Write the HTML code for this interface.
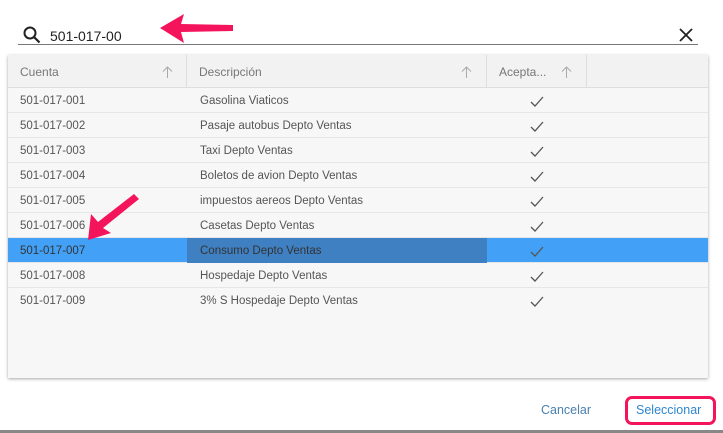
<!DOCTYPE html>
<html><head><style>
*{margin:0;padding:0;box-sizing:border-box}
body{width:723px;height:433px;background:#fff;font-family:"Liberation Sans",sans-serif;position:relative;overflow:hidden;color:#444}
.abs{position:absolute}
.grid{left:8px;top:55px;width:700px;height:323px;background:#f7f7f7;box-shadow:0 1px 3px rgba(0,0,0,.35)}
.hdr{position:absolute;left:0;top:0;width:700px;height:33px;background:#f2f2f2;border-bottom:1px solid #ddd}
.hc{position:absolute;top:0;height:33px;line-height:34px;font-size:12px;color:#777;border-right:1px solid #ddd;padding-left:12px}
.arr{position:absolute;top:11px}
.row{position:absolute;left:0;width:700px;height:25px;border-bottom:1px solid #e6e6e6;font-size:11.5px;line-height:26px;color:#555}
.row span{position:absolute}
.c1{left:12px}.c2{left:192px}
.chk{position:absolute;left:522px;top:8px}
.sel{background:#43a0f7;color:#333}
.sel .d{position:absolute;left:179px;top:0;width:300px;height:25px;background:#3f80c2}
</style></head><body>
<svg class="abs" style="left:22px;top:25px" width="20" height="20" viewBox="0 0 20 20"><circle cx="8" cy="8" r="5.5" fill="none" stroke="#222" stroke-width="2"/><line x1="12" y1="12" x2="17.5" y2="17.5" stroke="#222" stroke-width="2.2"/></svg>
<div class="abs" style="left:50px;top:28px;font-size:14px;color:#222">501-017-00</div>
<div class="abs" style="left:18px;top:44px;width:680px;height:1px;background:#777"></div>
<svg class="abs" style="left:678px;top:27px" width="16" height="16"><path d="M2 2L14 14M14 2L2 14" stroke="#222" stroke-width="1.8"/></svg>
<div class="abs grid">
<div class="hdr">
<div class="hc" style="left:0;width:179px">Cuenta<svg class="arr" style="left:154px" width="11" height="12"><path d="M5.5 1V12M1 5.5L5.5 1L10 5.5" fill="none" stroke="#aaa" stroke-width="1"/></svg></div>
<div class="hc" style="left:179px;width:300px">Descripción<svg class="arr" style="left:274px" width="11" height="12"><path d="M5.5 1V12M1 5.5L5.5 1L10 5.5" fill="none" stroke="#aaa" stroke-width="1"/></svg></div>
<div class="hc" style="left:479px;width:100px">Acepta...<svg class="arr" style="left:74px" width="11" height="12"><path d="M5.5 1V12M1 5.5L5.5 1L10 5.5" fill="none" stroke="#aaa" stroke-width="1"/></svg></div>
</div>
<div class="row" style="top:33px"><span class="c1">501-017-001</span><span class="c2">Gasolina Viaticos</span><svg class="chk" width="14" height="11"><path d="M1 6L5 10L13 1" fill="none" stroke="#555" stroke-width="1.3"/></svg></div>
<div class="row" style="top:58px"><span class="c1">501-017-002</span><span class="c2">Pasaje autobus Depto Ventas</span><svg class="chk" width="14" height="11"><path d="M1 6L5 10L13 1" fill="none" stroke="#555" stroke-width="1.3"/></svg></div>
<div class="row" style="top:83px"><span class="c1">501-017-003</span><span class="c2">Taxi Depto Ventas</span><svg class="chk" width="14" height="11"><path d="M1 6L5 10L13 1" fill="none" stroke="#555" stroke-width="1.3"/></svg></div>
<div class="row" style="top:108px"><span class="c1">501-017-004</span><span class="c2">Boletos de avion Depto Ventas</span><svg class="chk" width="14" height="11"><path d="M1 6L5 10L13 1" fill="none" stroke="#555" stroke-width="1.3"/></svg></div>
<div class="row" style="top:133px"><span class="c1">501-017-005</span><span class="c2">impuestos aereos Depto Ventas</span><svg class="chk" width="14" height="11"><path d="M1 6L5 10L13 1" fill="none" stroke="#555" stroke-width="1.3"/></svg></div>
<div class="row" style="top:158px"><span class="c1">501-017-006</span><span class="c2">Casetas Depto Ventas</span><svg class="chk" width="14" height="11"><path d="M1 6L5 10L13 1" fill="none" stroke="#555" stroke-width="1.3"/></svg></div>
<div class="row sel" style="top:183px"><div class="d"></div><span class="c1">501-017-007</span><span class="c2">Consumo Depto Ventas</span><svg class="chk" width="14" height="11"><path d="M1 6L5 10L13 1" fill="none" stroke="#555" stroke-width="1.3"/></svg></div>
<div class="row" style="top:208px"><span class="c1">501-017-008</span><span class="c2">Hospedaje Depto Ventas</span><svg class="chk" width="14" height="11"><path d="M1 6L5 10L13 1" fill="none" stroke="#555" stroke-width="1.3"/></svg></div>
<div class="row" style="top:233px;border:0"><span class="c1">501-017-009</span><span class="c2">3% S Hospedaje Depto Ventas</span><svg class="chk" width="14" height="11"><path d="M1 6L5 10L13 1" fill="none" stroke="#555" stroke-width="1.3"/></svg></div>
</div>
<svg class="abs" style="left:0;top:0" width="723" height="433">
<path d="M160 28L184 14L181 24L233 25L233 31L181 32L184 43Z" fill="#f4145c"/>
<path d="M88 240L91 214L98 222L134 194L139 199L103 228L111 233Z" fill="#f4145c"/>
</svg>
<div class="abs" style="left:541px;top:403px;font-size:12.5px;color:#4a7fb0">Cancelar</div>
<div class="abs" style="left:625px;top:396px;width:91px;height:29px;border:3px solid #f4145c;border-radius:7px"></div>
<div class="abs" style="left:636px;top:403px;font-size:12.5px;color:#2e86d0">Seleccionar</div>
<div class="abs" style="left:0;top:430px;width:723px;height:3px;background:#888"></div>
</body></html>
